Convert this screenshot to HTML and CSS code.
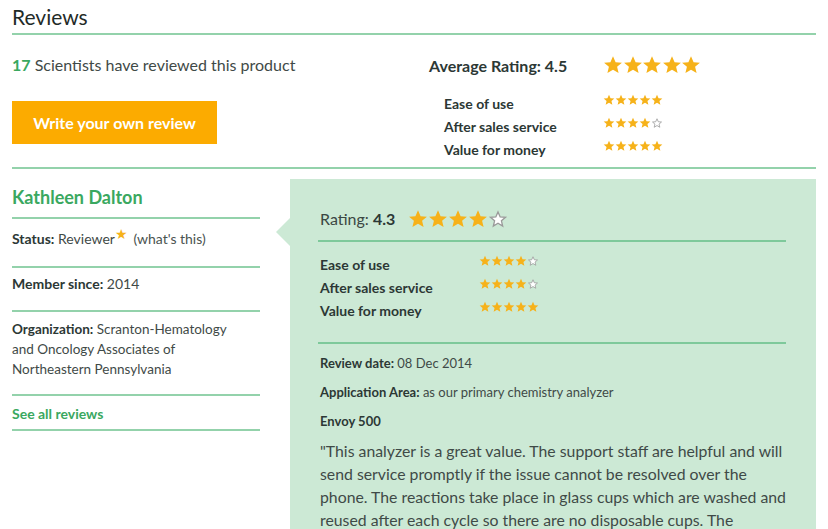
FILE: index.html
```html
<!DOCTYPE html>
<html>
<head>
<meta charset="utf-8">
<link rel="stylesheet" href="styles.css">
</head>
<body>
<svg width="0" height="0" class="defs">
  <defs>
    <symbol id="sf" viewBox="0 0 24 24"><path d="M12 1.5l3.1 7.1 7.6.6-5.8 5 1.8 7.5L12 17.7l-6.7 4 1.8-7.5-5.8-5 7.6-.6z" fill="#f6b21a"/></symbol>
    <symbol id="se" viewBox="0 0 24 24"><path d="M12 3.5l2.6 6 6.4.5-4.9 4.2 1.5 6.3L12 17.1l-5.6 3.4 1.5-6.3L3 10l6.4-.5z" fill="#fff" stroke="#9a9a9a" stroke-width="1.6"/></symbol>
  </defs>
</svg>
<div class="page">
  <h2 class="title">Reviews</h2>
  <div class="summary">
    <div class="sum-left">
      <p class="count"><span class="num">17</span> Scientists have reviewed this product</p>
      <a class="btn">Write your own review</a>
    </div>
    <div class="sum-right">
      <div class="avg">
        <span class="avg-label">Average Rating: 4.5</span>
        <span class="stars big"><svg><use href="#sf"/></svg><svg><use href="#sf"/></svg><svg><use href="#sf"/></svg><svg><use href="#sf"/></svg><svg><use href="#sf"/></svg></span>
      </div>
      <div class="sub"><span class="sub-label">Ease of use</span><span class="stars small"><svg><use href="#sf"/></svg><svg><use href="#sf"/></svg><svg><use href="#sf"/></svg><svg><use href="#sf"/></svg><svg><use href="#sf"/></svg></span></div>
      <div class="sub"><span class="sub-label">After sales service</span><span class="stars small"><svg><use href="#sf"/></svg><svg><use href="#sf"/></svg><svg><use href="#sf"/></svg><svg><use href="#sf"/></svg><svg><use href="#se"/></svg></span></div>
      <div class="sub"><span class="sub-label">Value for money</span><span class="stars small"><svg><use href="#sf"/></svg><svg><use href="#sf"/></svg><svg><use href="#sf"/></svg><svg><use href="#sf"/></svg><svg><use href="#sf"/></svg></span></div>
    </div>
  </div>
  <div class="review">
    <div class="reviewer">
      <h3 class="name">Kathleen Dalton</h3>
      <div class="info status"><b>Status:</b> Reviewer<span class="badge">★</span> <span class="what">(what's this)</span></div>
      <div class="info member"><b>Member since:</b> 2014</div>
      <div class="info org"><b>Organization:</b> Scranton-Hematology and Oncology Associates of Northeastern Pennsylvania</div>
      <div class="info link">See all reviews</div>
    </div>
    <div class="panel">
      <div class="rating">
        <span class="rating-label">Rating: <b>4.3</b></span>
        <span class="stars mid"><svg><use href="#sf"/></svg><svg><use href="#sf"/></svg><svg><use href="#sf"/></svg><svg><use href="#sf"/></svg><svg><use href="#se"/></svg></span>
      </div>
      <div class="prows">
        <div class="prow"><span class="prow-label">Ease of use</span><span class="stars small"><svg><use href="#sf"/></svg><svg><use href="#sf"/></svg><svg><use href="#sf"/></svg><svg><use href="#sf"/></svg><svg><use href="#se"/></svg></span></div>
        <div class="prow"><span class="prow-label">After sales service</span><span class="stars small"><svg><use href="#sf"/></svg><svg><use href="#sf"/></svg><svg><use href="#sf"/></svg><svg><use href="#sf"/></svg><svg><use href="#se"/></svg></span></div>
        <div class="prow"><span class="prow-label">Value for money</span><span class="stars small"><svg><use href="#sf"/></svg><svg><use href="#sf"/></svg><svg><use href="#sf"/></svg><svg><use href="#sf"/></svg><svg><use href="#sf"/></svg></span></div>
      </div>
      <p class="meta"><b>Review date:</b> 08 Dec 2014</p>
      <p class="meta"><b>Application Area:</b> <span class="small-text">as our primary chemistry analyzer</span></p>
      <p class="meta"><b>Envoy 500</b></p>
      <p class="body-text">"This analyzer is a great value. The support staff are helpful and will send service promptly if the issue cannot be resolved over the phone. The reactions take place in glass cups which are washed and reused after each cycle so there are no disposable cups. The</p>
    </div>
  </div>
</div>
</body>
</html>
```

FILE: styles.css
```css
* { box-sizing: border-box; }
html, body { margin: 0; padding: 0; background: #fff; }
body { font-family: Lato, "Open Sans", sans-serif; color: #3b4743; overflow: hidden; height: 529px; }
.defs { position: absolute; }
.page { width: 804px; margin-left: 12px; }
.title { margin: 0; padding-top: 5px; height: 35px; font-size: 21px; font-weight: 400; color: #1f2b28; line-height: 24px; border-bottom: 2px solid #93d2ab; }
.summary { display: flex; border-bottom: 2px solid #93d2ab; height: 134px; }
.sum-left { width: 417px; padding-top: 20px; }
.count { margin: 0; font-size: 16px; line-height: 20px; color: #3f4a47; }
.num { color: #3aa860; font-weight: 700; }
.btn { display: flex; align-items: center; justify-content: center; margin-top: 26px; width: 205px; height: 43px; background: #fcab00; color: #fff; font-weight: 700; font-size: 16px; }
.sum-right { padding-top: 19px; }
.avg { display: flex; align-items: center; height: 22px; margin-bottom: 16px; }
.avg-label { width: 174px; font-size: 16px; font-weight: 700; color: #2c3835; }
.stars { display: flex; }
.stars svg { display: block; }
.stars.big svg { width: 20px; height: 20px; margin-right: -0.5px; }
.stars.small svg { width: 12px; height: 12px; }
.stars.mid svg { width: 20px; height: 20px; }
.sub { display: flex; align-items: center; height: 23px; padding-left: 15px; }
.sub-label { width: 159px; font-size: 14px; font-weight: 700; color: #2c3835; }
.sub .stars { margin-top: -8px; }
.review { display: flex; gap: 30px; padding-top: 10px; }
.reviewer { width: 248px; }
.name { margin: 0; font-size: 18px; font-weight: 700; color: #3aa860; height: 40px; line-height: 22px; padding-top: 7px; border-bottom: 2px solid #93d2ab; }
.info { font-size: 14px; line-height: 20px; color: #3f4a47; border-bottom: 2px solid #93d2ab; padding: 10px 0 14px; }
.info b { color: #2c3835; }
.status { height: 49px; }
.badge { color: #f6b21a; font-size: 14px; position: relative; top: -5px; margin-right: 2px; }
.what { color: #4a5350; }
.member { height: 44px; padding-top: 6px; }
.org { padding-top: 7px; padding-bottom: 15px; height: 84px; font-size: 13.5px; padding-right: 12px; }
.link { color: #3aa860; font-weight: 700; padding-top: 8px; height: 35px; padding-bottom: 0; }
.panel { position: relative; flex: 1; background: #cce9d5; padding: 28px 30px 0; height: 360px; }
.panel::before { content: ""; position: absolute; left: -14px; top: 39px; border-right: 14px solid #cce9d5; border-top: 14px solid transparent; border-bottom: 14px solid transparent; }
.rating { display: flex; align-items: center; border-bottom: 2px solid #7ec99b; height: 35px; padding-bottom: 10px; margin-left: -2px; padding-left: 2px; }
.rating-label { font-size: 16px; color: #3b4743; margin-right: 13px; }
.rating-label b { font-weight: 700; color: #2c3835; }
.prows { border-bottom: 2px solid #7ec99b; padding-top: 11px; height: 102px; margin-left: -2px; padding-left: 2px; }
.prow { display: flex; align-items: center; height: 23px; }
.prow-label { width: 159px; font-size: 14px; font-weight: 700; color: #2c3835; }
.prow .stars { margin-top: -8px; }
.meta { margin: 0; font-size: 13px; line-height: 20px; height: 29px; padding-top: 9px; box-sizing: content-box; color: #3f4a47; }
.meta + .meta { padding-top: 0; }
.meta + .meta + .meta { height: 30px; }
.meta b { color: #2c3835; }
.small-text { font-size: 13px; }
.body-text { margin: 0; margin-top: -2px; margin-right: -4px; font-size: 15.8px; line-height: 23px; color: #3f4a47; }
```
